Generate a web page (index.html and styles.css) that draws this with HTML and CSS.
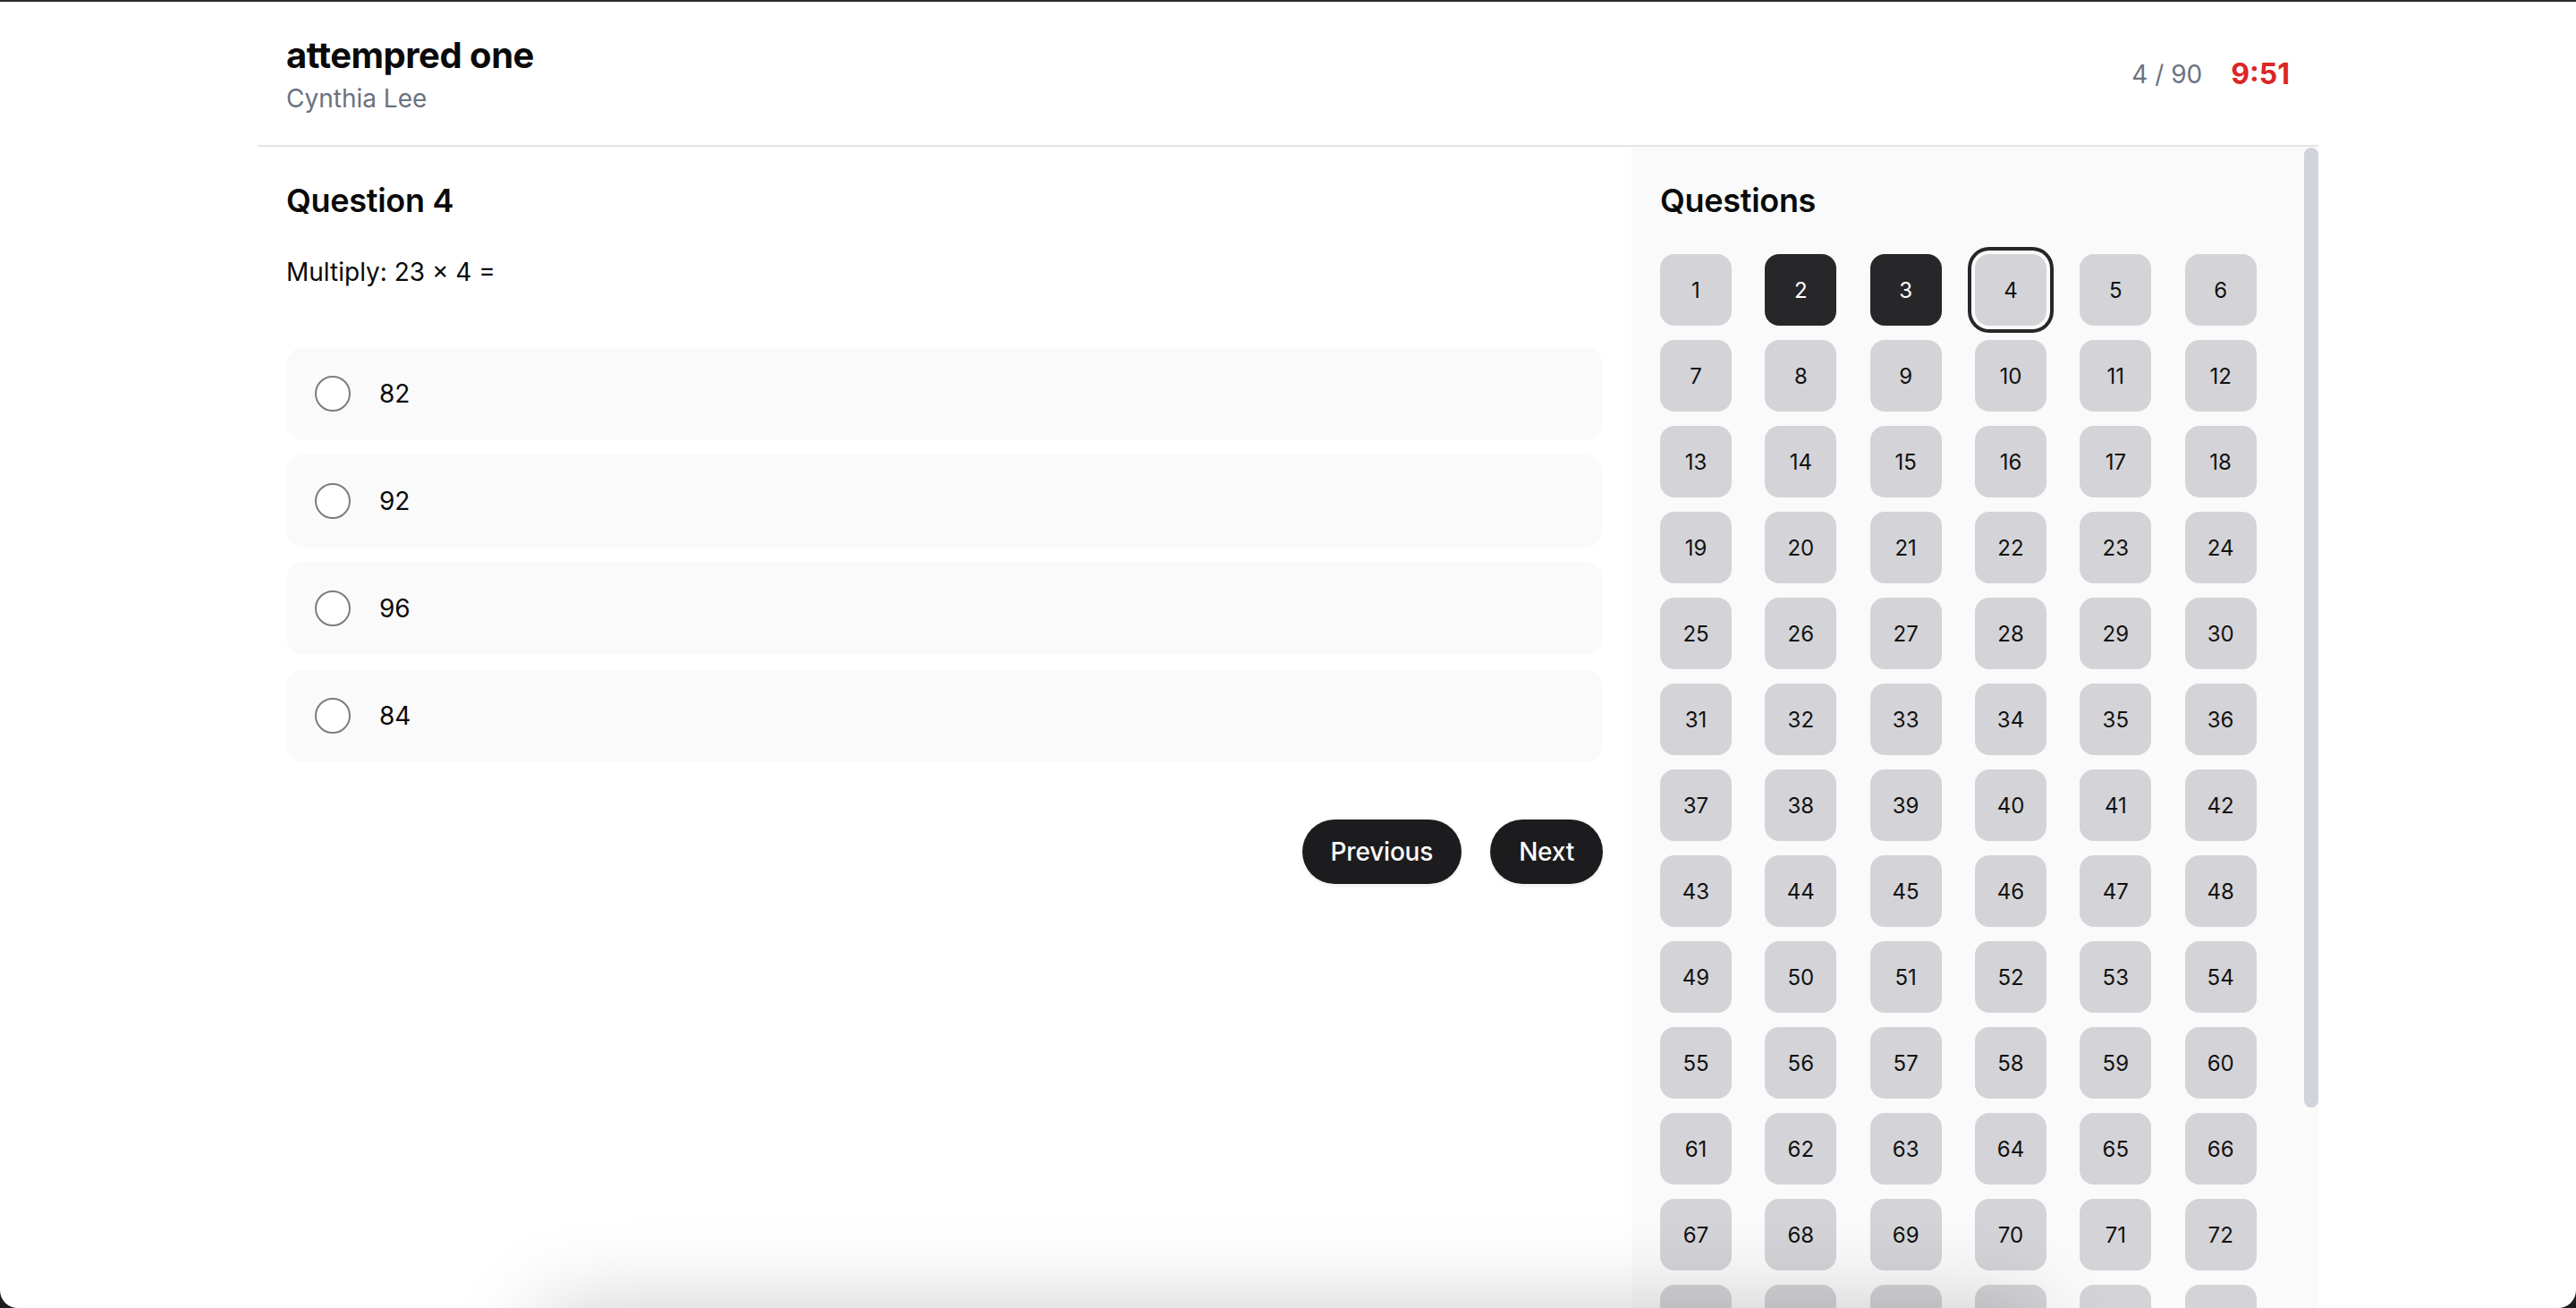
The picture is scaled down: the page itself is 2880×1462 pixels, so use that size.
FILE: index.html
```html
<!DOCTYPE html>
<html lang="en">
<head>
<meta charset="utf-8">
<title>attempred one</title>
<link rel="stylesheet" href="styles.css">
</head>
<body>
<div class="window">
  <div class="container">
    <header class="topbar">
      <div class="title-block">
        <h1 class="title">attempred one</h1>
        <p class="subtitle">Cynthia Lee</p>
      </div>
      <div class="status">
        <span class="progress">4 / 90</span>
        <span class="timer">9:51</span>
      </div>
    </header>
    <div class="content">
      <main class="question">
        <h2 class="heading">Question 4</h2>
        <p class="prompt">Multiply: 23 × 4 =</p>
        <div class="options">
          <label class="option"><span class="radio"></span><span class="option-text">82</span></label>
          <label class="option"><span class="radio"></span><span class="option-text">92</span></label>
          <label class="option"><span class="radio"></span><span class="option-text">96</span></label>
          <label class="option"><span class="radio"></span><span class="option-text">84</span></label>
        </div>
        <div class="nav-buttons">
          <button class="pill">Previous</button>
          <button class="pill">Next</button>
        </div>
      </main>
      <aside class="sidebar">
        <h2 class="heading">Questions</h2>
        <div class="grid">
          <button class="qbtn">1</button>
          <button class="qbtn done">2</button>
          <button class="qbtn done">3</button>
          <button class="qbtn current">4</button>
          <button class="qbtn">5</button>
          <button class="qbtn">6</button>
          <button class="qbtn">7</button>
          <button class="qbtn">8</button>
          <button class="qbtn">9</button>
          <button class="qbtn">10</button>
          <button class="qbtn">11</button>
          <button class="qbtn">12</button>
          <button class="qbtn">13</button>
          <button class="qbtn">14</button>
          <button class="qbtn">15</button>
          <button class="qbtn">16</button>
          <button class="qbtn">17</button>
          <button class="qbtn">18</button>
          <button class="qbtn">19</button>
          <button class="qbtn">20</button>
          <button class="qbtn">21</button>
          <button class="qbtn">22</button>
          <button class="qbtn">23</button>
          <button class="qbtn">24</button>
          <button class="qbtn">25</button>
          <button class="qbtn">26</button>
          <button class="qbtn">27</button>
          <button class="qbtn">28</button>
          <button class="qbtn">29</button>
          <button class="qbtn">30</button>
          <button class="qbtn">31</button>
          <button class="qbtn">32</button>
          <button class="qbtn">33</button>
          <button class="qbtn">34</button>
          <button class="qbtn">35</button>
          <button class="qbtn">36</button>
          <button class="qbtn">37</button>
          <button class="qbtn">38</button>
          <button class="qbtn">39</button>
          <button class="qbtn">40</button>
          <button class="qbtn">41</button>
          <button class="qbtn">42</button>
          <button class="qbtn">43</button>
          <button class="qbtn">44</button>
          <button class="qbtn">45</button>
          <button class="qbtn">46</button>
          <button class="qbtn">47</button>
          <button class="qbtn">48</button>
          <button class="qbtn">49</button>
          <button class="qbtn">50</button>
          <button class="qbtn">51</button>
          <button class="qbtn">52</button>
          <button class="qbtn">53</button>
          <button class="qbtn">54</button>
          <button class="qbtn">55</button>
          <button class="qbtn">56</button>
          <button class="qbtn">57</button>
          <button class="qbtn">58</button>
          <button class="qbtn">59</button>
          <button class="qbtn">60</button>
          <button class="qbtn">61</button>
          <button class="qbtn">62</button>
          <button class="qbtn">63</button>
          <button class="qbtn">64</button>
          <button class="qbtn">65</button>
          <button class="qbtn">66</button>
          <button class="qbtn">67</button>
          <button class="qbtn">68</button>
          <button class="qbtn">69</button>
          <button class="qbtn">70</button>
          <button class="qbtn">71</button>
          <button class="qbtn">72</button>
          <button class="qbtn">73</button>
          <button class="qbtn">74</button>
          <button class="qbtn">75</button>
          <button class="qbtn">76</button>
          <button class="qbtn">77</button>
          <button class="qbtn">78</button>
          <button class="qbtn">79</button>
          <button class="qbtn">80</button>
          <button class="qbtn">81</button>
          <button class="qbtn">82</button>
          <button class="qbtn">83</button>
          <button class="qbtn">84</button>
          <button class="qbtn">85</button>
          <button class="qbtn">86</button>
          <button class="qbtn">87</button>
          <button class="qbtn">88</button>
          <button class="qbtn">89</button>
          <button class="qbtn">90</button>
        </div>
        <div class="scroll-thumb"></div>
      </aside>
    </div>
  </div>
  <div class="bottom-shadow"></div>
</div>
</body>
</html>
```
FILE: styles.css
```css
* {
  box-sizing: border-box;
}

html, body {
  margin: 0;
  padding: 0;
  background: #1d1d1f;
}

body {
  font-family: Inter, "Noto Sans", sans-serif;
  color: #0a0a0a;
}

.window {
  position: relative;
  height: 100vh;
  background: #ffffff;
  border-top: 2px solid #2b2b2e;
  border-radius: 0 0 20px 20px;
  overflow: hidden;
  display: flex;
  flex-direction: column;
}

.container {
  width: 2304px;
  margin: 0 auto;
  flex: 1;
  min-height: 0;
  display: flex;
  flex-direction: column;
}

.topbar {
  display: flex;
  justify-content: space-between;
  align-items: center;
  padding: 32px;
  border-bottom: 2px solid #e5e5e5;
}

.title {
  margin: 0;
  font-size: 40px;
  line-height: 56px;
  font-weight: 700;
  letter-spacing: -0.5px;
  color: #0a0a0a;
}

.subtitle {
  margin: 0;
  font-size: 28px;
  line-height: 40px;
  color: #6b7280;
}

.status {
  display: flex;
  align-items: center;
  gap: 32px;
  padding-top: 2px;
}

.progress {
  font-size: 28px;
  line-height: 40px;
  color: #6b7280;
}

.timer {
  font-size: 32px;
  line-height: 48px;
  font-weight: 700;
  color: #dc2626;
}

.content {
  flex: 1;
  min-height: 0;
  display: flex;
}

.question {
  flex: 1;
  padding: 32px;
}

.heading {
  margin: 0 0 32px;
  font-size: 36px;
  line-height: 56px;
  font-weight: 600;
  letter-spacing: -0.3px;
  color: #0a0a0a;
}

.prompt {
  margin: 0 0 64px;
  font-size: 28px;
  line-height: 40px;
}

.options {
  display: flex;
  flex-direction: column;
  gap: 16px;
}

.option {
  display: flex;
  align-items: center;
  gap: 32px;
  padding: 32px;
  background: #fafafa;
  border-radius: 20px;
}

.radio {
  width: 40px;
  height: 40px;
  border-radius: 50%;
  border: 2px solid #7d7d7d;
  background: #ffffff;
  flex: none;
}

.option-text {
  font-size: 28px;
  line-height: 40px;
}

.nav-buttons {
  display: flex;
  justify-content: flex-end;
  gap: 32px;
  margin-top: 64px;
}

.pill {
  height: 72px;
  padding: 0 32px;
  border: none;
  border-radius: 9999px;
  background: #1c1c1e;
  color: #ffffff;
  font-family: Inter, "Noto Sans", sans-serif;
  font-size: 28px;
  line-height: 40px;
  font-weight: 500;
  letter-spacing: -0.2px;
  box-shadow: 0 2px 4px rgba(0, 0, 0, 0.08);
}

.sidebar {
  position: relative;
  width: 768px;
  flex: none;
  background: #fafafa;
  padding: 32px 48px 32px 32px;
  overflow: hidden;
}

.scroll-thumb {
  position: absolute;
  top: 1px;
  right: 0;
  width: 16px;
  height: 1073px;
  border-radius: 8px;
  background: #d1d5db;
}

.grid {
  display: grid;
  grid-template-columns: repeat(6, 1fr);
  gap: 16px;
}

.qbtn {
  width: 80px;
  height: 80px;
  border: none;
  border-radius: 16px;
  background: #d4d4d8;
  color: #111111;
  font-family: Inter, "Noto Sans", sans-serif;
  font-size: 24px;
  padding: 0;
}

.qbtn.done {
  background: #27272a;
  color: #ffffff;
}

.qbtn.current {
  box-shadow: 0 0 0 4px #fafafa, 0 0 0 8px #27272a;
}

.bottom-shadow {
  position: absolute;
  top: 100%;
  left: 50%;
  width: 1680px;
  height: 200px;
  margin-left: -840px;
  border-radius: 40px;
  box-shadow: 0 0 100px rgba(0, 0, 0, 0.2);
  z-index: 10;
}
```
